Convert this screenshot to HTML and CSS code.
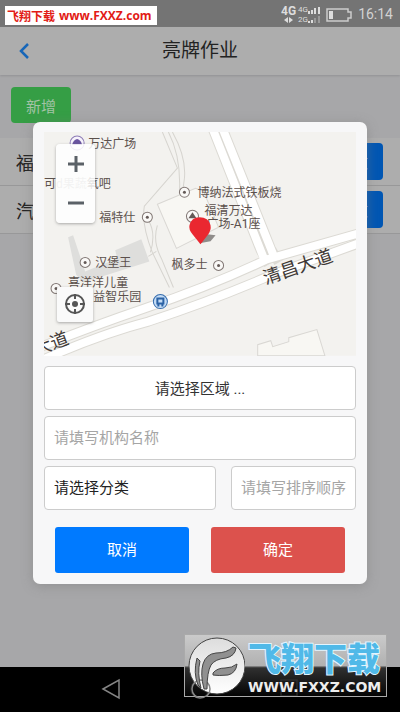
FILE: index.html
```html
<!DOCTYPE html>
<html lang="zh-CN">
<head>
<meta charset="utf-8">
<meta name="viewport" content="width=device-width, initial-scale=1">
<title>亮牌作业</title>
<link rel="stylesheet" href="styles.css">
</head>
<body>
<div class="screen">
  <div class="status">
    <span class="promo">飞翔下载 <span class="promo-url">www.FXXZ.com</span></span>
    <svg class="signals" viewBox="0 0 72 24" aria-hidden="true">
      <text class="net" x="0" y="13">4G</text>
      <path class="light" d="M3 18l4-3v6zM12 18l-4-3v6z"/>
      <text class="net-small" x="17" y="10">4G</text>
      <text class="net-small" x="17" y="20">2G</text>
      <path class="light" d="M27 9h2v3h-2zM30 8h2v4h-2zM33 6h2v6h-2zM37 5h2v7h-2zM27 19h2v2h-2zM30 18h2v3h-2z"/>
      <path class="dim" d="M33 16h2v5h-2zM37 14h2v7h-2z"/>
      <path class="outline" d="M46 7h21v3h3v6h-3v3H46z"/>
      <path class="light" d="M48 9h4v8h-4z"/>
    </svg>
    <span class="clock">16:14</span>
  </div>
  <header class="header">
    <button class="back" type="button" aria-label="返回"><svg viewBox="0 0 12 18"><path d="M10 2L3 9l7 7"/></svg></button>
    <h1>亮牌作业</h1>
  </header>
  <main class="content">
    <button class="add" type="button">新增</button>
    <ul class="list">
      <li><span>福清</span><button class="edit" type="button">修改</button></li>
      <li><span>汽车</span><button class="edit" type="button">修改</button></li>
    </ul>
  </main>
  <nav class="nav" aria-label="系统导航">
    <svg viewBox="0 0 400 45"><path d="M103 22l16-9v18z"/><circle cx="200" cy="22" r="9"/><path d="M281 13h16v16h-16z"/></svg>
  </nav>
</div>

<div class="overlay">
  <form class="dialog">
    <div class="map">
      <svg class="map-art" viewBox="44 132 311 223" role="img" aria-label="地图">
        <path class="land" d="M44 132h311v223H44z"/>
        <path class="block" d="M68 237l5-2 12 36 32-13-2-8 26-11 8 22-66 21-7-8z"/>
        <path class="plot" d="M157 204l38-16 8 3 15 36-42 21zM257 355v-11l13-4 2 6 16-5v-4l28-8 8 26z"/>
        <path class="line" d="M162 132l15 36-33 38q-3 18 8 46l17 35M172 132q14 25 12 46l-2 15M168 132q13 25 11 61M148 256l8-5M148 220q8 13 2 32M157 225q-5 16 4 33l12 29"/>
        <path class="edge" d="M211 126l49 124 8 14M221 126l49 122 8 14"/>
        <path class="edge" d="M36 348q58-23 108-40 70-24 122-49l99-28M36 362q62-28 112-41 64-21 124-47l94-34"/>
        <path class="road" d="M211 126l49 124 4 10M221 126l49 122 4 10"/>
        <path class="road" d="M36 348q58-23 108-40 70-24 122-49l99-28M36 362q62-28 112-41 64-21 124-47l94-34"/>
        <g class="poi">
          <circle cx="184" cy="192" r="5"/><circle cx="147" cy="217" r="5"/><circle cx="192" cy="216" r="6"/>
          <circle cx="218" cy="265" r="5"/><circle cx="85" cy="262" r="5"/><circle cx="56" cy="288" r="5"/>
        </g>
        <g class="poi-dot">
          <circle cx="184" cy="192" r="1.500"/><circle cx="147" cy="217" r="1.500"/><circle cx="218" cy="265" r="1.500"/>
          <circle cx="85" cy="262" r="1.500"/><circle cx="56" cy="288" r="1.500"/><path d="M188 218l4-6 4 6z"/>
        </g>
        <circle class="mall" cx="77" cy="143" r="7"/><path class="mall-mark" d="M72 145q1-5 5-6 4 1 5 6z"/>
        <circle class="bus" cx="160" cy="301" r="7"/><path class="bus-mark" d="M156 297h8v7h-1v2h-2v-2h-2v2h-2v-2h-1z"/><path class="bus-window" d="M158 299h4v3h-4z"/>
        <g class="place">
          <text x="88" y="148">万达广场</text>
          <text x="44" y="188">可<tspan class="faded">d果蔬</tspan>氧吧</text>
          <text x="99" y="222">福特仕</text>
          <text x="197" y="197">博纳法式铁板烧</text>
          <text x="204" y="215">福清万达</text>
          <text x="206" y="228">广场-A1座</text>
          <text x="95" y="267">汉堡王</text>
          <text x="171" y="269">枫多士</text>
          <text x="68" y="287">喜洋洋儿童</text>
          <text x="93" y="300">益智乐园</text>
        </g>
        <text class="street" transform="translate(265 284) rotate(-19)">清昌大道</text>
        <text class="street" transform="translate(36 355) rotate(-20)">大道</text>
        <path class="pin-shadow" d="M199 243l8-9 8 1-5 6z"/>
        <path class="pin" d="M200 244l-8-10q-4-5-3-9 2-8 10-8 9 0 11 8 1 5-3 10z"/>
      </svg>
      <div class="zoom">
        <button type="button" aria-label="放大"><svg viewBox="0 0 16 16"><path d="M0 8h16M8 0v16"/></svg></button>
        <button type="button" aria-label="缩小"><svg viewBox="0 0 16 16"><path d="M0 8h16"/></svg></button>
      </div>
      <button class="locate" type="button" aria-label="定位">
        <svg viewBox="0 0 22 22"><circle cx="11" cy="11" r="9"/><path d="M11 1v5M11 16v5M1 11h5M16 11h5"/><circle class="core" cx="11" cy="11" r="3"/></svg>
      </button>
    </div>
    <button class="field area" type="button">请选择区域 ...</button>
    <input class="field" type="text" aria-label="机构名称" placeholder="请填写机构名称">
    <div class="pair">
      <select class="field" aria-label="分类"><option>请选择分类</option></select>
      <input class="field" type="text" aria-label="排序顺序" placeholder="请填写排序顺序">
    </div>
    <div class="actions">
      <button class="cancel" type="button">取消</button>
      <button class="confirm" type="submit">确定</button>
    </div>
  </form>
</div>

<div class="brand">
  <svg class="brand-logo" viewBox="0 0 60 62" aria-hidden="true">
    <defs><linearGradient id="silver" x2="0" y2="1"><stop offset="0" stop-color="#ddd"/><stop offset="1" stop-color="#fff"/></linearGradient></defs>
    <circle class="disc" cx="32" cy="31" r="28"/>
    <circle class="ring" cx="16" cy="54" r="9"/>
    <path class="feather" d="M19 54q-4-15-1-25 3-10 13-11 11 0 17-6l3 1q-1 8-10 10-11 1-15 7-4 7-4 24z"/>
    <path class="feather" d="M28 38q4-5 12-5 7 0 12-4-1 9-9 11-10 1-15 0zM12 23q-4 15 1 27l3 3q-4-15-1-27z"/>
  </svg>
  <div class="brand-text"><span class="brand-name">飞翔下载</span><span class="brand-url">WWW.FXXZ.COM</span></div>
</div>
</body>
</html>
```
FILE: styles.css
```css
* { box-sizing: border-box; }
body { margin: 0; font-family: Roboto, "Noto Sans CJK SC", sans-serif; font-size: 16px; color: #222; background: #a7a7a9; }
button, input, select { font: inherit; margin: 0; }
button { border: 0; padding: 0; }
svg { display: block; }
.screen { display: flex; flex-direction: column; min-height: 100vh; }
.status { display: flex; align-items: center; height: 27px; padding: 0 7px 0 5px; background: #747474; color: #d2d2d2; }
.promo { display: flex; align-items: center; gap: 4px; height: 19px; padding: 0 5px 0 2px; margin-top: 3px; background: #fff; color: #e21b16; font-size: 12px; font-weight: 700; white-space: nowrap; }
.promo-url { font-family: "Open Sans", "Noto Sans", sans-serif; font-size: 12px; }
.signals { width: 72px; height: 24px; margin-left: auto; }
.clock { margin-left: 5px; font-size: 14px; }
.net { font: 700 12px Roboto, sans-serif; fill: #ddd; }
.net-small { font: 8px Roboto, sans-serif; fill: #ddd; }
.light { fill: #ddd; }
.dim { fill: #999; }
.outline { fill: none; stroke: #ccc; stroke-width: 1.500; }
.header { display: grid; grid-template-columns: 50px 1fr 50px; align-items: center; height: 48px; background: #adadad; box-shadow: 0 1px 2px #929294; }
.header h1 { margin: 0; font-size: 19px; line-height: 28px; font-weight: 400; text-align: center; }
.back { display: flex; align-items: center; height: 48px; padding-left: 18px; background: none; }
.back svg { width: 12px; height: 18px; fill: none; stroke: #1766b8; stroke-width: 2.500; }
.content { flex: 1; padding-top: 12px; }
.add { width: 60px; height: 36px; margin-left: 11px; border-radius: 4px; background: #359e45; color: #a3c3a5; font-size: 15px; }
.list { list-style: none; margin: 15px 0 0; padding: 0; background: #adadad; }
.list li { display: flex; align-items: center; justify-content: space-between; height: 48px; padding: 0 17px 0 16px; border-bottom: 1px solid #989899; font-size: 18px; }
.edit { width: 60px; height: 37px; border-radius: 4px; background: #0056b3; color: #9ab7d3; font-size: 15px; }
.nav { height: 45px; background: #000; }
.nav svg { width: 100%; height: 45px; fill: none; stroke: #858585; stroke-width: 1.500; }
.overlay { position: absolute; inset: 0 0 6px; display: flex; align-items: center; justify-content: center; }
.dialog { display: flex; flex-direction: column; gap: 6px; width: calc(100% - 66px); padding: 10px 11px 11px; border-radius: 7px; background: #f7f7f8; box-shadow: 0 2px 12px #7777; }
.map { position: relative; margin-bottom: 4px; }
.map-art { width: 100%; }
.land { fill: #f3f2ef; }
.block { fill: #dededc; }
.plot { fill: #f8f7f3; stroke: #d9d7d3; }
.line { fill: none; stroke: #d6d4cf; }
.edge { fill: none; stroke: #dcdad4; stroke-width: 10; }
.road { fill: none; stroke: #fff; stroke-width: 8; }
.poi { fill: #faf9f7; stroke: #817774; }
.poi-dot { fill: #635956; }
.mall { fill: #f6f2fb; stroke: #8c7bb6; }
.mall-mark { fill: #6953a0; }
.bus { fill: #c4dcf5; stroke: #356cad; }
.bus-mark { fill: #2b62a5; }
.bus-window { fill: #c4dcf5; }
.place { font-size: 12px; fill: #5b504c; }
.faded { fill: #aaa; }
.street { font-size: 18px; fill: #3f3936; }
.pin { fill: #ea2730; }
.pin-shadow { fill: #8f8c8a; }
.zoom { position: absolute; left: 12px; top: 12px; width: 39px; height: 79px; border-radius: 4px; background: #ffffffd8; box-shadow: 0 1px 3px #7779; }
.zoom button { display: flex; align-items: center; justify-content: center; width: 100%; height: 39px; background: none; }
.zoom svg { width: 16px; height: 16px; fill: none; stroke: #5b6167; stroke-width: 3; }
.locate { position: absolute; left: 13px; bottom: 34px; display: flex; align-items: center; justify-content: center; width: 36px; height: 35px; border-radius: 2px; background: #fafafa; box-shadow: 0 1px 3px #7779; }
.locate svg { width: 22px; height: 22px; fill: none; stroke: #555; stroke-width: 2; }
.locate .core { fill: #555; stroke: none; }
.field { width: 100%; min-width: 0; height: 44px; padding: 0 9px; border: 1px solid #ccc; border-radius: 4px; background: #fff; color: #222; font-size: 15px; appearance: none; }
.field::placeholder { color: #a5a5a5; opacity: 1; }
.area { text-align: center; color: #333; }
.pair { display: grid; grid-template-columns: 172fr 125fr; gap: 15px; }
.actions { display: grid; grid-template-columns: 1fr 1fr; gap: 22px; padding: 11px 11px 0; }
.actions button { height: 46px; padding-bottom: 2px; border-radius: 3px; color: #fff; font-size: 15px; }
.cancel { background: #007aff; }
.confirm { background: #dc524d; }
.brand { position: absolute; right: 13px; bottom: 15px; display: flex; align-items: center; width: 203px; height: 63px; border: 1px solid #aaa; background: linear-gradient(#d0d0d0dd, #b2b2b2dd 50%, #303030 54%, #050505bb); }
.brand-logo { flex: none; width: 60px; height: 62px; }
.ring { fill: none; stroke: #888; stroke-width: 1.500; }
.disc { fill: url(#silver); stroke: #444; }
.feather { fill: #909090; stroke: #444; }
.brand-text { display: flex; flex-direction: column; padding: 4px 0 0 3px; white-space: nowrap; }
.brand-name { font-size: 33px; line-height: 38px; font-weight: 900; color: #50b9e8; -webkit-text-stroke: 2px #e2f5ff; paint-order: stroke fill; }
.brand-url { font-family: "DejaVu Sans", sans-serif; font-size: 14px; line-height: 16px; font-weight: 700; color: #eee; }
```
